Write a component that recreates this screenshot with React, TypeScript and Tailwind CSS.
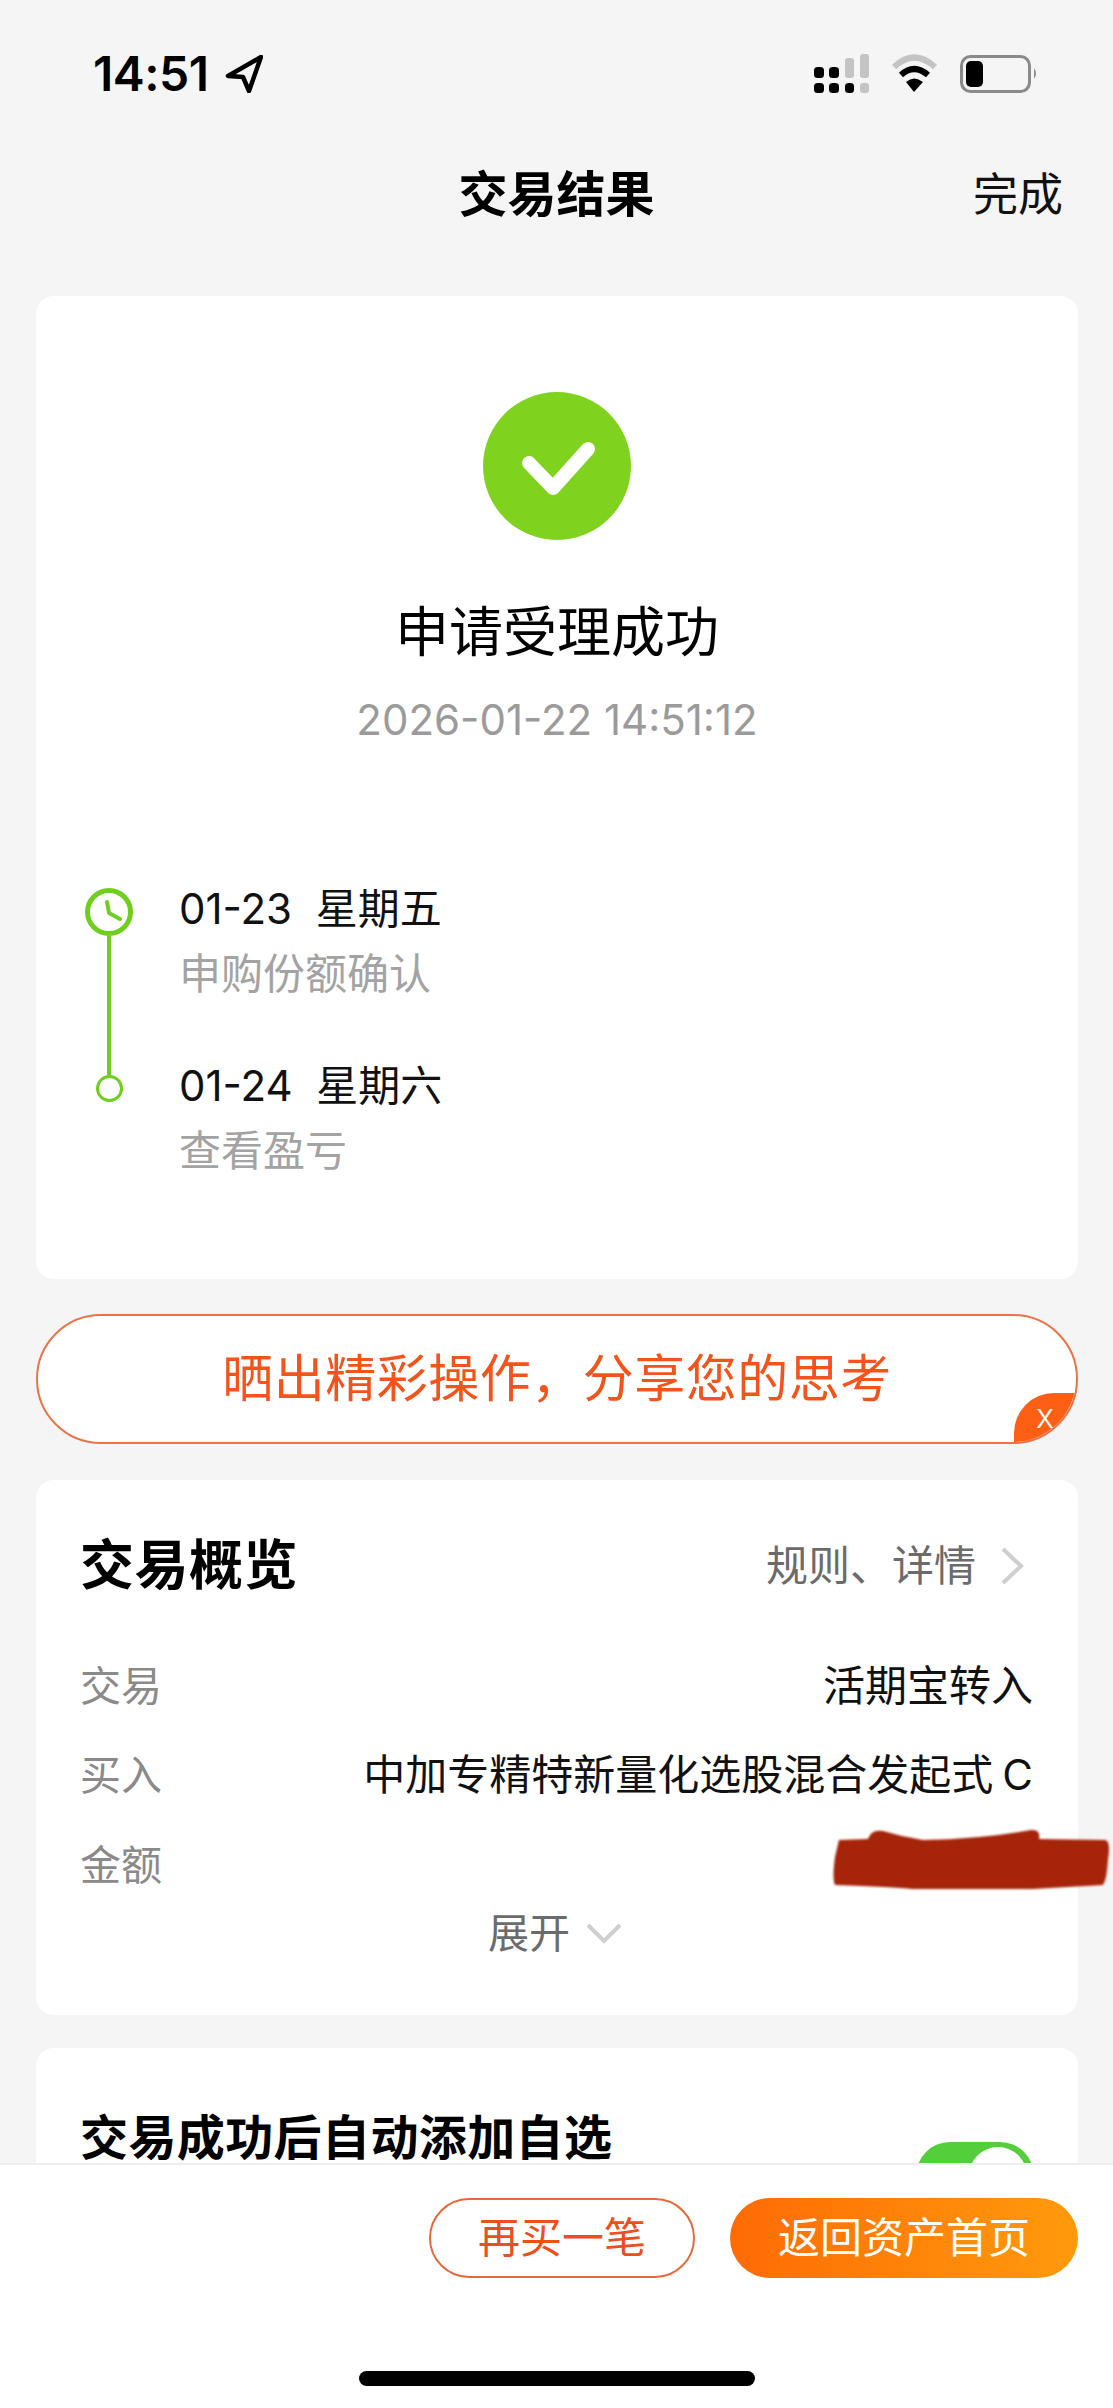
export default function App() {
  const sans = "font-['Inter','Noto_Sans_CJK_SC',sans-serif]";
  return (
    <div className={`relative h-[2408px] w-[1113px] overflow-hidden bg-[#f5f5f5] text-black ${sans}`}>
      <header className="h-[296px]">
        <div className="flex h-[98px] items-end justify-between pl-[93px] pr-[73px]">
          <div className="flex h-[48px] items-center gap-[16px]">
            <span className="text-[48px] font-semibold leading-[48px] tracking-[-0.5px]">14:51</span>
            <svg width="38" height="38" viewBox="0 0 38 38" fill="none">
              <path d="M36 2 L3 21 L18 22 L24 36 Z" stroke="#000" strokeWidth="4.5" strokeLinejoin="round" />
            </svg>
          </div>
          <svg width="230" height="48" viewBox="810 50 230 48" fill="none">
            <rect x="814" y="67" width="10" height="11" rx="3.5" fill="#000" />
            <rect x="829" y="67" width="10" height="11" rx="3.5" fill="#000" />
            <rect x="845" y="58" width="9" height="20" rx="3" fill="#c4c4c4" />
            <rect x="860" y="54" width="9" height="24" rx="3" fill="#c4c4c4" />
            <rect x="814" y="83" width="10" height="10" rx="3.5" fill="#000" />
            <rect x="829" y="83" width="10" height="10" rx="3.5" fill="#000" />
            <rect x="845" y="83" width="9" height="10" rx="3.5" fill="#000" />
            <rect x="860" y="83" width="9" height="10" rx="3" fill="#c4c4c4" />
            <path d="M894 67 Q914 48 935 67" stroke="#c4c4c4" strokeWidth="6" />
            <path d="M901 75 Q914 63 928 75" stroke="#000" strokeWidth="6" />
            <path d="M906 82 Q914 75 923 82 L914 92 Z" fill="#000" />
            <rect x="961.5" y="56.5" width="68" height="35" rx="9" stroke="#8a8a8a" strokeWidth="3" />
            <rect x="966" y="61" width="17" height="26" rx="5" fill="#000" />
            <path d="M1034 68 Q1038 74 1034 79 Z" fill="#8a8a8a" />
          </svg>
        </div>
        <div className="relative mt-[57px] flex h-[80px] items-center justify-center">
          <span className="text-[49px] font-bold leading-[80px]">交易结果</span>
          <span className="absolute right-[50px] top-0 text-[45px] leading-[80px] text-[#111]">完成</span>
        </div>
      </header>

      <main className="flex flex-col pl-[36px] pr-[35px]">
        <section className="flex h-[983px] flex-col items-center rounded-[18px] bg-white pt-[96px]">
          <svg width="148" height="148" viewBox="0 0 148 148">
            <circle cx="74" cy="74" r="74" fill="#7fd31f" />
            <path d="M46 71 L70 96 L105 57" fill="none" stroke="#fff" strokeWidth="14" strokeLinecap="round" strokeLinejoin="round" />
          </svg>
          <h1 className="mt-[58px] text-[54px] font-normal leading-[70px]">申请受理成功</h1>
          <p className="mt-[27px] text-[42px] leading-[50px] text-[#9b9b9b]">2026-01-22 14:51:12</p>
          <div className="mt-[143px] flex w-full pl-[49px]">
            <div className="flex w-[48px] flex-col items-center">
              <svg width="48" height="48" viewBox="0 0 48 48" fill="none">
                <circle cx="24" cy="24" r="21.5" stroke="#6fce1f" strokeWidth="5" />
                <path d="M22 14 L24 25 L35 31" stroke="#6fce1f" strokeWidth="4" strokeLinecap="round" strokeLinejoin="round" />
              </svg>
              <div className="h-[139px] w-[4px] bg-[#6fce1f]" />
              <div className="h-[27px] w-[27px] rounded-full border-[3px] border-[#6fce1f]" />
            </div>
            <div className="ml-[46px] mt-[-4px] flex flex-col">
              <p className="whitespace-pre text-[42px] leading-[50px] text-[#111]">01-23  星期五</p>
              <p className="mt-[15px] text-[42px] leading-[50px] text-[#a3a3a3]">申购份额确认</p>
              <p className="mt-[62px] whitespace-pre text-[42px] leading-[50px] text-[#111]">01-24  星期六</p>
              <p className="mt-[15px] text-[42px] leading-[50px] text-[#a3a3a3]">查看盈亏</p>
            </div>
          </div>
        </section>

        <section className="relative mt-[35px] flex h-[130px] items-center justify-center overflow-hidden rounded-[65px] border-2 border-[#ea7348] bg-white">
          <span className="text-[51px] leading-[60px] tracking-[0.5px] text-[#f2541b]">晒出精彩操作，分享您的思考</span>
          <span className="absolute bottom-0 right-0 flex h-[49px] w-[62px] items-center justify-center rounded-tl-[40px] bg-[#fd5f14] pb-[4px] text-[34px] font-light leading-none text-white">x</span>
        </section>

        <section className="relative mt-[36px] h-[535px] rounded-[18px] bg-white pl-[46px] pr-[45px] pt-[56px]">
          <div className="flex h-[60px] items-center justify-between">
            <h2 className="ml-[-2px] text-[54px] font-bold leading-[60px] tracking-[0.5px]">交易概览</h2>
            <div className="mr-[9px] flex items-center gap-[24px]">
              <span className="text-[42px] leading-[60px] text-[#6b6b6b]">规则、详情</span>
              <svg width="24" height="38" viewBox="0 0 24 38" fill="none">
                <path d="M3 2 L21 19 L3 36" stroke="#cfcfcf" strokeWidth="4" />
              </svg>
            </div>
          </div>
          <div className="mt-[60px] flex h-[60px] items-center justify-between">
            <span className="ml-[-2px] text-[41px] leading-[60px] text-[#8a8a8a]">交易</span>
            <span className="text-[42px] leading-[60px] text-[#111]">活期宝转入</span>
          </div>
          <div className="mt-[29px] flex h-[60px] items-center justify-between">
            <span className="ml-[-2px] text-[41px] leading-[60px] text-[#8a8a8a]">买入</span>
            <span className="text-[42px] leading-[60px] text-[#111]">中加专精特新量化选股混合发起式<span className="ml-[9px]">C</span></span>
          </div>
          <div className="mt-[30px] flex h-[60px] items-center">
            <span className="ml-[-2px] text-[41px] leading-[60px] text-[#8a8a8a]">金额</span>
          </div>
          <div className="mt-[8px] flex h-[60px] items-center justify-center gap-[16px] pr-[5px]">
            <span className="text-[41px] leading-[60px] text-[#6b6b6b]">展开</span>
            <svg width="36" height="22" viewBox="0 0 36 22" fill="none">
              <path d="M2 3 L18 19 L34 3" stroke="#cfcfcf" strokeWidth="4" />
            </svg>
          </div>
          <svg className="absolute left-[797px] top-[347px] blur-[1px]" width="280" height="66" viewBox="0 0 280 66">
            <path d="M6 13 L35 12 Q38 2 50 4 Q70 10 90 13 Q150 12 198 3 Q208 2 206 12 L272 13 Q278 14 275 32 Q274 52 270 58 L200 62 L80 62 Q60 60 2 58 Q-1 52 2 30 Z" fill="#a5240a" />
          </svg>
        </section>

        <section className="mt-[33px] h-[300px] rounded-[18px] bg-white pl-[44px] pr-[44px] pt-[62px]">
          <div className="flex items-start justify-between">
            <h2 className="text-[48px] font-bold leading-[56px] tracking-[0.4px]">交易成功后自动添加自选</h2>
            <div className="relative mt-[32px] h-[68px] w-[118px] rounded-full bg-[#53cf3c]">
              <div className="absolute right-[7px] top-[5px] h-[58px] w-[58px] rounded-full bg-white" />
            </div>
          </div>
        </section>
      </main>

      <footer className="absolute bottom-0 left-0 right-0 h-[245px] border-t-2 border-[#eeeeee] bg-white">
        <div className="mt-[33px] flex justify-end gap-[35px] pr-[35px]">
          <button className="h-[80px] w-[266px] rounded-[40px] border-2 border-[#e8683c] bg-white text-[42px] leading-none text-[#ea4f1c]">再买一笔</button>
          <button className="h-[80px] w-[348px] rounded-[40px] bg-gradient-to-r from-[#ff6a05] to-[#ff9a0c] text-[42px] leading-none text-white">返回资产首页</button>
        </div>
        <div className="mx-auto mt-[93px] h-[15px] w-[396px] rounded-full bg-black" />
      </footer>
    </div>
  );
}
